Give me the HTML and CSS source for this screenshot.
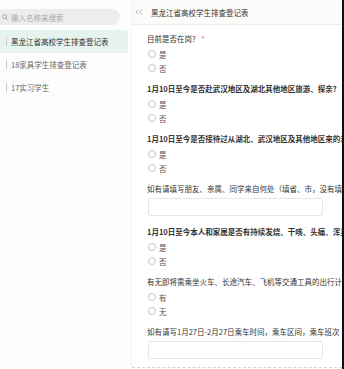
FILE: index.html
```html
<!DOCTYPE html>
<html lang="zh-CN">
<head>
    <meta charset="UTF-8">
    <meta name="viewport" content="width=device-width, initial-scale=1.0">
    <title>排查登记表</title>
    <link rel="stylesheet" href="styles.css">
</head>
<body>
    <div class="page">
        <aside class="sidebar">
            <div class="search">
                <svg class="search-icon" width="6" height="6" viewBox="0 0 6 6">
                    <circle cx="2.6" cy="2.6" r="2" fill="none" stroke="#999" stroke-width="0.8"/>
                    <line x1="4" y1="4" x2="5.7" y2="5.7" stroke="#999" stroke-width="0.8"/>
                </svg>
                <span class="placeholder">输入名称来搜索</span>
            </div>
            <ul class="form-list">
                <li class="active">黑龙江省高校学生排查登记表</li>
                <li>18家具学生排查登记表</li>
                <li>17实习学生</li>
            </ul>
        </aside>

        <main class="main">
            <header class="topbar">
                <svg class="collapse" width="8" height="6" viewBox="0 0 8 6">
                    <polyline points="3.5,0.5 1,3 3.5,5.5" fill="none" stroke="#8fa3b8" stroke-width="0.8"/>
                    <polyline points="7,0.5 4.5,3 7,5.5" fill="none" stroke="#8fa3b8" stroke-width="0.8"/>
                </svg>
                <span class="title">黑龙江省高校学生排查登记表</span>
            </header>

            <div class="content">
                <div class="question">
                    <p class="label">目前是否在岗? <span class="required">*</span></p>
                    <label class="radio"><span class="dot"></span>是</label>
                    <label class="radio"><span class="dot"></span>否</label>
                </div>

                <div class="question">
                    <p class="label strong">1月10日至今是否赴武汉地区及湖北其他地区旅游、探亲?</p>
                    <label class="radio"><span class="dot"></span>是</label>
                    <label class="radio"><span class="dot"></span>否</label>
                </div>

                <div class="question">
                    <p class="label strong">1月10日至今是否接待过从湖北、武汉地区及其他地区来的亲友?</p>
                    <label class="radio"><span class="dot"></span>是</label>
                    <label class="radio"><span class="dot"></span>否</label>
                </div>

                <div class="question text-question">
                    <p class="label">如有请填写朋友、亲属、同学来自何处（填省、市，没有填无）</p>
                    <div class="text-input"></div>
                </div>

                <div class="question">
                    <p class="label strong">1月10日至今本人和家属是否有持续发烧、干咳、头痛、浑身乏力等症状?</p>
                    <label class="radio"><span class="dot"></span>是</label>
                    <label class="radio"><span class="dot"></span>否</label>
                </div>

                <div class="question">
                    <p class="label">有无即将需乘坐火车、长途汽车、飞机等交通工具的出行计划?</p>
                    <label class="radio"><span class="dot"></span>有</label>
                    <label class="radio"><span class="dot"></span>无</label>
                </div>

                <div class="question text-question">
                    <p class="label">如有请写1月27日-2月27日乘车时间，乘车区间，乘车班次</p>
                    <div class="text-input"></div>
                </div>
            </div>
        </main>

        <div class="edge"></div>
    </div>
</body>
</html>
```

FILE: styles.css
```css
/* Global */
body {
    margin: 0;
    font-family: "Noto Sans CJK SC", "Noto Sans", sans-serif;
    font-size: 7.5px;
    color: #333;
    background: #fff;
    overflow: hidden;
}

.page {
    display: flex;
    height: 369px;
}

/* Sidebar */
.sidebar {
    width: 128px;
    flex-shrink: 0;
    background: #fdfdfd;
}

.search {
    display: flex;
    align-items: center;
    gap: 3px;
    margin: 9px 8px 0 0;
    height: 16px;
    padding-left: 2px;
    background: #ededed;
    border-radius: 0 8px 8px 0;
}

.placeholder {
    color: #a8a8a8;
}

.form-list {
    list-style: none;
    margin: 5px 0 0;
    padding: 0;
}

.form-list li {
    display: flex;
    align-items: center;
    gap: 4px;
    height: 23px;
    padding-left: 6px;
    color: #666;
    white-space: nowrap;
}

.form-list li::before {
    content: "";
    width: 1px;
    height: 9px;
    background: #c8c8c8;
}

.form-list li.active {
    background: #e7f3ee;
    color: #333;
}

/* Main */
.main {
    width: 210px;
    flex-shrink: 0;
    margin-left: 3px;
    border-left: 1px solid #f1f1f1;
    overflow: hidden;
}

.topbar {
    display: flex;
    align-items: center;
    gap: 8px;
    height: 24px;
    padding-left: 3px;
    background: #fbfbfa;
    border-bottom: 1px solid #ececec;
    white-space: nowrap;
}

.content {
    padding: 8px 0 0 15px;
    border-bottom: 1px dashed #d6d6d6;
    height: 334px;
}

.question {
    margin-bottom: 8px;
}

.label {
    margin: 0 0 2px;
    line-height: 12px;
    white-space: nowrap;
}

.strong {
    font-weight: bold;
}

.required {
    color: #e5544b;
    margin-left: 4px;
}

.radio {
    display: flex;
    align-items: center;
    gap: 3px;
    height: 14px;
    padding-left: 1px;
    color: #555;
}

.dot {
    width: 6px;
    height: 6px;
    border: 1px solid #c4c4c4;
    border-radius: 50%;
    background: #fff;
}

.text-question {
    margin-bottom: 10px;
}

.text-question .label {
    margin-bottom: 3px;
}

.text-input {
    width: 173px;
    height: 16px;
    margin-left: 1px;
    border: 1px solid #e6e6e6;
    border-radius: 2px;
    background: #fff;
}

.edge {
    width: 3px;
    margin-left: auto;
    background: #111;
}
```
